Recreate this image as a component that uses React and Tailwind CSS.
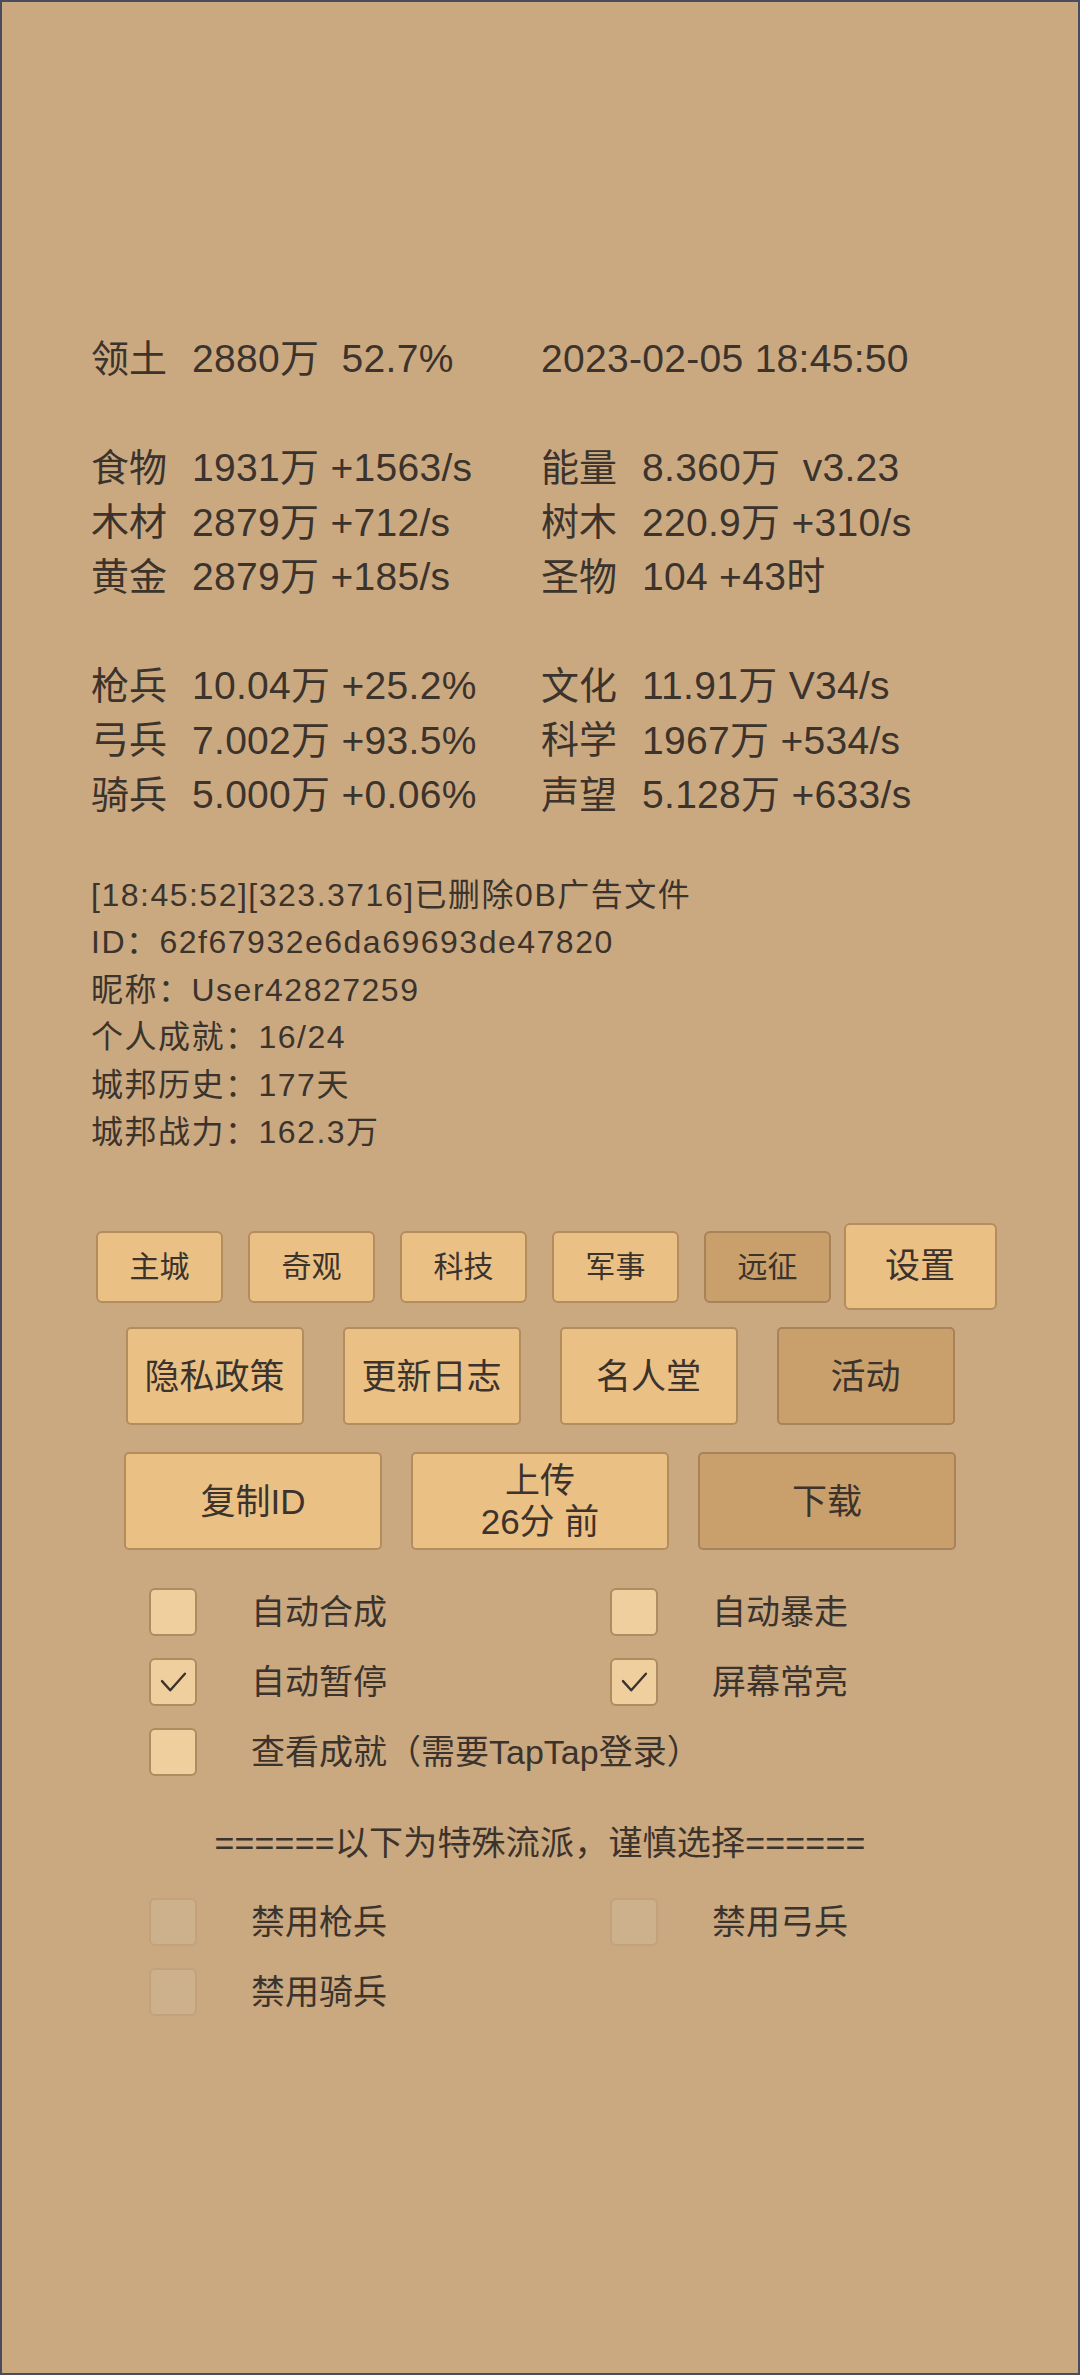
import React from "react";

const FONT = { fontFamily: '"Liberation Sans", "Noto Sans CJK SC", sans-serif' };

function Stat({ label, value }) {
  return (
    <div className="flex items-center h-[54.5px] whitespace-pre">
      <span className="w-[76px]">{label}</span>
      <span className="ml-[25px] text-[39px] tracking-[0.3px]">{value}</span>
    </div>
  );
}

function SmallBtn({ children, dark }) {
  return (
    <div
      className={`mx-[12.5px] w-[127px] h-[72px] flex items-center justify-center rounded-[6px] border-2 text-[30px] ${
        dark ? "bg-[#c9a06c] border-[#a8825a]" : "bg-[#ebc085] border-[#b48d5e]"
      }`}
    >
      {children}
    </div>
  );
}

function Btn({ children, dark, w }) {
  return (
    <div
      className={`${w} h-[98px] flex flex-col items-center justify-center rounded-[5px] border-2 text-[35px] leading-[41px] text-center ${
        dark ? "bg-[#c9a06c] border-[#a8825a]" : "bg-[#ebc085] border-[#b48d5e]"
      }`}
    >
      {children}
    </div>
  );
}

function Check({ checked, disabled }) {
  return (
    <div
      className={`w-[48px] h-[48px] rounded-[6px] border-2 flex items-center justify-center ${
        disabled ? "bg-[#cdb08c] border-[#c1a27c]" : "bg-[#efcf9e] border-[#ad8c62]"
      }`}
    >
      {checked && (
        <svg width="48" height="48" viewBox="0 0 48 48" fill="none">
          <path d="M12 23 L21 33 L37 15" stroke="#3b332c" strokeWidth="2.6" strokeLinecap="round" strokeLinejoin="round" />
        </svg>
      )}
    </div>
  );
}

function CheckItem({ label, checked, disabled }) {
  return (
    <div className="flex items-center h-[48px]">
      <Check checked={checked} disabled={disabled} />
      <span className="ml-[54px] text-[34px] whitespace-pre">{label}</span>
    </div>
  );
}

export default function App() {
  return (
    <div
      style={FONT}
      className="w-[1080px] h-[2375px] box-border border-2 border-[#4a4b5e] bg-[#caa981] text-[#3b332c] overflow-hidden"
    >
      <div className="pt-[330px] pl-[89px] text-[38px]">
        <div className="grid grid-cols-[450px_1fr]">
          <Stat label="领土" value="2880万  52.7%" />
          <div className="flex items-center h-[54.5px] text-[39px] tracking-[0.3px]">2023-02-05 18:45:50</div>
          <div className="h-[54.5px]" />
          <div className="h-[54.5px]" />
          <Stat label="食物" value="1931万 +1563/s" />
          <Stat label="能量" value="8.360万  v3.23" />
          <Stat label="木材" value="2879万 +712/s" />
          <Stat label="树木" value="220.9万 +310/s" />
          <Stat label="黄金" value="2879万 +185/s" />
          <Stat label="圣物" value="104 +43时" />
          <div className="h-[54.5px]" />
          <div className="h-[54.5px]" />
          <Stat label="枪兵" value="10.04万 +25.2%" />
          <Stat label="文化" value="11.91万 V34/s" />
          <Stat label="弓兵" value="7.002万 +93.5%" />
          <Stat label="科学" value="1967万 +534/s" />
          <Stat label="骑兵" value="5.000万 +0.06%" />
          <Stat label="声望" value="5.128万 +633/s" />
        </div>
      </div>

      <div className="mt-[49px] pl-[89px] text-[32px] leading-[47.6px] tracking-[1.5px]">
        <div>[18:45:52][323.3716]已删除0B广告文件</div>
        <div>ID：62f67932e6da69693de47820</div>
        <div>昵称：User42827259</div>
        <div>个人成就：16/24</div>
        <div>城邦历史：177天</div>
        <div>城邦战力：162.3万</div>
      </div>

      <div className="mt-[66px] flex items-center justify-center">
        <SmallBtn>主城</SmallBtn>
        <SmallBtn>奇观</SmallBtn>
        <SmallBtn>科技</SmallBtn>
        <SmallBtn>军事</SmallBtn>
        <SmallBtn dark>远征</SmallBtn>
        <div className="w-[153px] h-[87px] flex items-center justify-center rounded-[6px] border-2 bg-[#ebc085] border-[#b48d5e] text-[35px]">
          设置
        </div>
      </div>

      <div className="mt-[17px] flex justify-center gap-[39px]">
        <Btn w="w-[178px]">隐私政策</Btn>
        <Btn w="w-[178px]">更新日志</Btn>
        <Btn w="w-[178px]">名人堂</Btn>
        <Btn w="w-[178px]" dark>活动</Btn>
      </div>

      <div className="mt-[27px] flex justify-center gap-[29px]">
        <Btn w="w-[258px]">复制ID</Btn>
        <Btn w="w-[258px]">
          <span>上传</span>
          <span className="whitespace-pre">26分 前</span>
        </Btn>
        <Btn w="w-[258px]" dark>下载</Btn>
      </div>

      <div className="mt-[38px] pl-[147px] grid grid-cols-[461px_1fr] gap-y-[22px]">
        <CheckItem label="自动合成" />
        <CheckItem label="自动暴走" />
        <CheckItem label="自动暂停" checked />
        <CheckItem label="屏幕常亮" checked />
        <div className="col-span-2">
          <CheckItem label="查看成就（需要TapTap登录）" />
        </div>
      </div>

      <div className="mt-[43px] h-[48px] flex items-center justify-center text-[34px] tracking-[0.2px]">
        ======以下为特殊流派，谨慎选择======
      </div>

      <div className="mt-[31px] pl-[147px] grid grid-cols-[461px_1fr] gap-y-[22px]">
        <CheckItem label="禁用枪兵" disabled />
        <CheckItem label="禁用弓兵" disabled />
        <CheckItem label="禁用骑兵" disabled />
      </div>
    </div>
  );
}
